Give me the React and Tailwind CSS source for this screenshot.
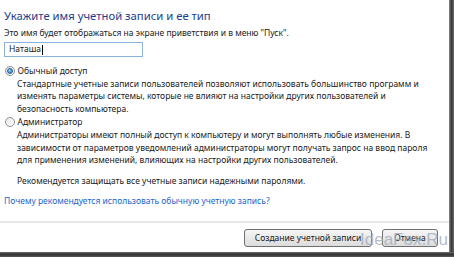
import React from 'react';

function Radio({ checked }) {
  return (
    <span className="relative mt-[1px] inline-flex h-[10px] w-[10px] shrink-0 items-center justify-center rounded-full border border-[#8f8f8f] bg-gradient-to-br from-[#e9e9e9] to-[#ffffff]">
      {checked && (
        <span className="h-[6px] w-[6px] rounded-full bg-[radial-gradient(circle_at_35%_35%,#8fd3ff,#1f6fc0)] border border-[#2a5c9a]" />
      )}
    </span>
  );
}

export default function App() {
  return (
    <div className="relative h-[257px] w-[454px] overflow-hidden bg-[#3d3d3d] font-['Noto_Sans','Open_Sans',sans-serif] text-[8.5px] text-[#1a1a1a]">
      <div className="flex h-[252px] w-[449px] flex-col bg-white">
        {/* Body */}
        <div className="flex flex-col px-[4px] pt-[8px]">
          <h1 className="text-[11.3px] leading-[16px] text-[#1c3d8f]">Укажите имя учетной записи и ее тип</h1>
          <p className="mt-[3px] leading-[12px]">Это имя будет отображаться на экране приветствия и в меню "Пуск".</p>
          <div className="mt-[3px] flex h-[15px] w-[139px] items-center border border-[#8ab4dc] pl-[4px] leading-none">
            Наташа<span className="ml-[1px] h-[10px] w-[1px] bg-black" />
          </div>

          <div className="mt-[8px] flex items-start gap-[3px] pl-[0.5px] leading-[12.6px]">
            <Radio checked />
            <span>Обычный доступ</span>
          </div>
          <p className="pl-[13px] pr-[20px] leading-[12.6px]">
            Стандартные учетные записи пользователей позволяют использовать большинство программ и изменять параметры системы, которые не влияют на настройки других пользователей и безопасность компьютера.
          </p>

          <div className="mt-[1px] flex items-start gap-[3px] pl-[0.5px] leading-[12.6px]">
            <Radio />
            <span>Администратор</span>
          </div>
          <p className="pl-[13px] pr-[8px] leading-[12.6px]">
            Администраторы имеют полный доступ к компьютеру и могут выполнять любые изменения. В зависимости от параметров уведомлений администраторы могут получать запрос на ввод пароля для применения изменений, влияющих на настройки других пользователей.
          </p>

          <p className="mt-[8px] pl-[13px] leading-[12.6px]">Рекомендуется защищать все учетные записи надежными паролями.</p>

          <p className="mt-[8px] leading-[12.6px] text-[#1a66cc]">Почему рекомендуется использовать обычную учетную запись?</p>
        </div>

        {/* Footer */}
        <div className="mt-auto h-[31px] border-t-2 border-[#e8e8e8] bg-white">
          <div className="flex justify-end gap-[10px] pr-[11px] pt-[6px]">
            <button className="h-[18px] w-[128px] rounded-[3px] border border-[#707070] bg-gradient-to-b from-[#f6f6f6] to-[#dcdcdc] text-[8.5px] leading-none text-[#1a1a1a]">
              Создание учетной записи
            </button>
            <button className="h-[18px] w-[56px] rounded-[3px] border border-[#707070] bg-gradient-to-b from-[#f6f6f6] to-[#dcdcdc] text-[8.5px] leading-none text-[#1a1a1a]">
              Отмена
            </button>
          </div>
        </div>
      </div>

      {/* Window edge shading */}
      <div className="absolute right-0 top-0 h-full w-[5px] bg-gradient-to-r from-[#8a8a8a] via-[#3a3a3a] to-[#6a6a6a]" />
      <div className="absolute bottom-0 left-0 h-[5px] w-full bg-gradient-to-b from-[#6a6a6a] via-[#333333] to-[#5a5a5a]" />

      {/* Watermark */}
      <div className="pointer-events-none absolute left-[360px] top-[231px] font-['Liberation_Sans',sans-serif] text-[17px] leading-none text-[#a3adbd] opacity-80">
        IdeaFox.Ru
      </div>
    </div>
  );
}
